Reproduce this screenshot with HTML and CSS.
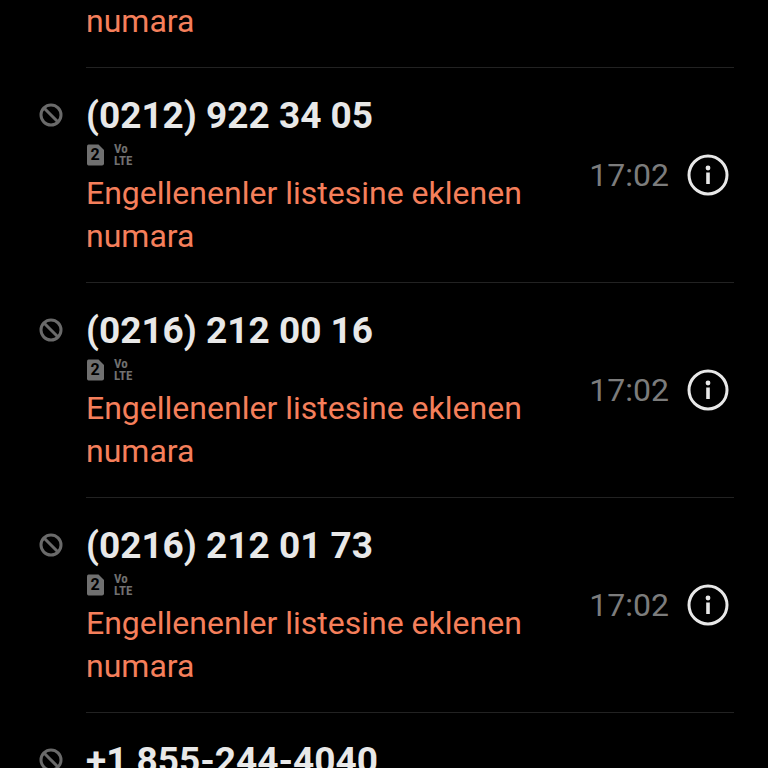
FILE: index.html
```html
<!DOCTYPE html>
<html lang="tr">
<head>
    <meta charset="UTF-8">
    <meta name="viewport" content="width=device-width, initial-scale=1">
    <title>Arama geçmişi</title>
    <link rel="stylesheet" href="styles.css">
</head>
<body>
    <svg class="defs" aria-hidden="true">
        <symbol id="blocked" viewBox="0 0 24 24">
            <circle cx="12" cy="12" r="10" fill="none" stroke="currentColor" stroke-width="3"/>
            <path d="M5 5l14 14" stroke="currentColor" stroke-width="3"/>
        </symbol>
        <symbol id="info" viewBox="0 0 42 42">
            <circle cx="21" cy="21" r="19" fill="none" stroke="currentColor" stroke-width="3"/>
            <circle cx="21" cy="14" r="2.4" fill="currentColor"/>
            <path d="M21 18.5V30" stroke="currentColor" stroke-width="3.6"/>
        </symbol>
        <symbol id="sim" viewBox="0 0 18 22">
            <path d="M2.500 0.500H12.500L18 6V19.500q0 2-2 2H2.500q-1.500 0-1.500-2V2.500q0-2 1.500-2z" fill="currentColor"/>
        </symbol>
    </svg>
    <ul class="calls">
        <li class="call first">
            <div class="info">
                <p class="reason">numara</p>
            </div>
        </li>
        <li class="call">
            <svg class="blocked"><use href="#blocked"/></svg>
            <div class="info">
                <h2>(0212) 922 34 05</h2>
                <div class="tags">
                    <span class="sim"><svg><use href="#sim"/></svg><b>2</b></span>
                    <span class="volte"><span>Vo</span><span>LTE</span></span>
                </div>
                <p class="reason">Engellenenler listesine eklenen numara</p>
            </div>
            <span class="time">17:02</span>
            <button class="details" aria-label="Ayrıntılar"><svg><use href="#info"/></svg></button>
        </li>
        <li class="call">
            <svg class="blocked"><use href="#blocked"/></svg>
            <div class="info">
                <h2>(0216) 212 00 16</h2>
                <div class="tags">
                    <span class="sim"><svg><use href="#sim"/></svg><b>2</b></span>
                    <span class="volte"><span>Vo</span><span>LTE</span></span>
                </div>
                <p class="reason">Engellenenler listesine eklenen numara</p>
            </div>
            <span class="time">17:02</span>
            <button class="details" aria-label="Ayrıntılar"><svg><use href="#info"/></svg></button>
        </li>
        <li class="call">
            <svg class="blocked"><use href="#blocked"/></svg>
            <div class="info">
                <h2>(0216) 212 01 73</h2>
                <div class="tags">
                    <span class="sim"><svg><use href="#sim"/></svg><b>2</b></span>
                    <span class="volte"><span>Vo</span><span>LTE</span></span>
                </div>
                <p class="reason">Engellenenler listesine eklenen numara</p>
            </div>
            <span class="time">17:02</span>
            <button class="details" aria-label="Ayrıntılar"><svg><use href="#info"/></svg></button>
        </li>
        <li class="call">
            <svg class="blocked"><use href="#blocked"/></svg>
            <div class="info">
                <h2>+1 855-244-4040</h2>
            </div>
        </li>
    </ul>
</body>
</html>
```

FILE: styles.css
```css
*{
    margin:0;
    padding:0;
    box-sizing:border-box;
}
html,body{
    height:100%;
}
body{
    background-color:#000;
    color:#e8e8e8;
    font-family:Roboto,"Noto Sans",sans-serif;
    overflow:hidden;
}
.defs{
    display:none;
}
.calls{
    height:100%;
    overflow:hidden;
    list-style:none;
}
.call{
    display:flex;
    align-items:center;
    gap:18px;
    margin:0 34px 0 86px;
    padding:24px 5px 24px 0;
    border-bottom:1px solid #222;
}
.call.first{
    padding-top:0;
}
.call:last-child{
    border-bottom:0;
}
.blocked{
    flex:none;
    align-self:flex-start;
    width:24px;
    height:24px;
    margin:11px 5px 0 -47px;
    color:#6a6a6a;
}
.info{
    flex:1;
}
h2{
    font-size:37px;
    line-height:48px;
    font-weight:700;
}
.tags{
    display:flex;
    align-items:center;
    gap:10px;
    height:32px;
    padding-bottom:2px;
    color:#707070;
}
.sim{
    display:grid;
    place-items:center;
}
.sim svg,.sim b{
    grid-area:1/1;
    width:18px;
    height:22px;
}
.sim b{
    color:#000;
    font-size:16px;
    line-height:22px;
    text-align:center;
    z-index:1;
}
.volte{
    display:flex;
    flex-direction:column;
    font-family:"Roboto Condensed","Liberation Sans Narrow",Roboto,sans-serif;
    font-size:13px;
    line-height:12px;
    font-weight:700;
}
.reason{
    max-width:450px;
    color:#f57f5b;
    font-size:32px;
    line-height:43px;
}
.time{
    color:#7c7c7c;
    font-size:32px;
    line-height:40px;
}
.details{
    width:42px;
    height:42px;
    border:0;
    background:none;
    color:#e8e8e8;
    cursor:pointer;
}
.details svg{
    display:block;
    width:42px;
    height:42px;
}
```
